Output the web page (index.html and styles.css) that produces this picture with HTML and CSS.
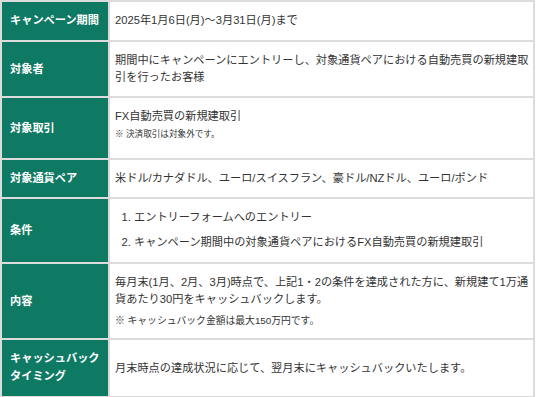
FILE: index.html
```html
<!DOCTYPE html>
<html lang="ja">
<head>
<meta charset="utf-8">
<link rel="stylesheet" href="styles.css">
</head>
<body>
<table class="campaign">
  <tr class="r1">
    <th>キャンペーン期間</th>
    <td>2025年1月6日(月)～3月31日(月)まで</td>
  </tr>
  <tr>
    <th>対象者</th>
    <td>期間中にキャンペーンにエントリーし、対象通貨ペアにおける自動売買の新規建取引を行ったお客様</td>
  </tr>
  <tr>
    <th>対象取引</th>
    <td>FX自動売買の新規建取引<p class="note note-small">※ 決済取引は対象外です。</p></td>
  </tr>
  <tr>
    <th>対象通貨ペア</th>
    <td>米ドル/カナダドル、ユーロ/スイスフラン、豪ドル/NZドル、ユーロ/ポンド</td>
  </tr>
  <tr class="r5">
    <th>条件</th>
    <td>
      <ol class="conds">
        <li>エントリーフォームへのエントリー</li>
        <li>キャンペーン期間中の対象通貨ペアにおけるFX自動売買の新規建取引</li>
      </ol>
    </td>
  </tr>
  <tr>
    <th>内容</th>
    <td>毎月末(1月、2月、3月)時点で、上記1・2の条件を達成された方に、新規建て1万通貨あたり30円をキャッシュバックします。<p class="note note-mid">※ キャッシュバック金額は最大150万円です。</p></td>
  </tr>
  <tr class="r7">
    <th>キャッシュバック<br>タイミング</th>
    <td>月末時点の達成状況に応じて、翌月末にキャッシュバックいたします。</td>
  </tr>
</table>
</body>
</html>
```

FILE: styles.css
```css
html, body {
  margin: 0;
  padding: 0;
  background: #fff;
}
.campaign {
  width: 535px;
  border-collapse: collapse;
  font-family: "Liberation Sans", "Noto Sans CJK JP", sans-serif;
  font-size: 11.2px;
  line-height: 17px;
  color: #333;
}
.campaign th,
.campaign td {
  border: 2px solid #dcdcdc;
  vertical-align: middle;
  text-align: left;
  padding-top: 10px;
  padding-bottom: 10px;
}
.campaign th {
  width: 92px;
  background: #0f7a64;
  color: #fff;
  font-weight: bold;
  padding-left: 8px;
  padding-right: 6px;
  white-space: nowrap;
}
.campaign td {
  padding-left: 5px;
  padding-right: 1px;
}
.r1 th, .r1 td {
  padding-bottom: 11px;
}
.r5 th, .r5 td {
  padding-bottom: 11px;
}
.r7 th {
  line-height: 18px;
  padding-top: 9px;
  padding-bottom: 11px;
}
.note {
  margin: 0;
  line-height: 15px;
}
.note-small {
  font-size: 8.6px;
  margin: 2px 0 6px;
}
.note-mid {
  font-size: 9.8px;
  margin-top: 5px;
}
.conds {
  margin: 0;
  padding-left: 19px;
}
.conds li + li {
  margin-top: 8px;
}
```
